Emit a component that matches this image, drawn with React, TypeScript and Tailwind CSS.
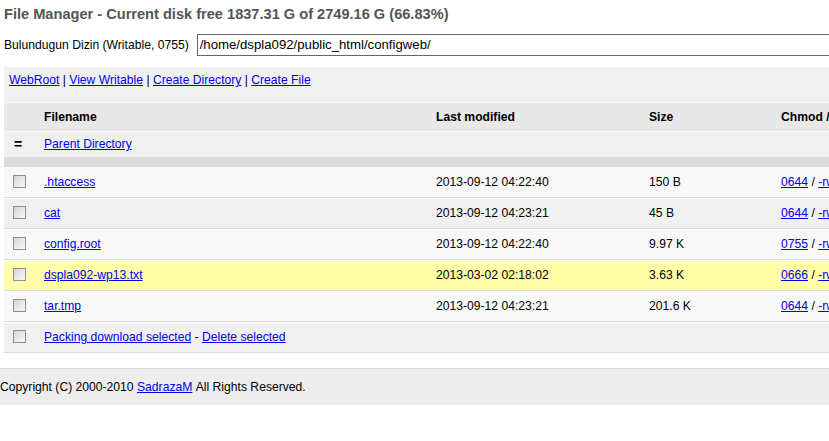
import React from "react";

type FileRow = {
  name: string;
  modified: string;
  size: string;
  chmod: string;
  perms: string;
  bg: string;
};

const files: FileRow[] = [
  { name: ".htaccess", modified: "2013-09-12 04:22:40", size: "150 B", chmod: "0644", perms: "-rw-r--r--", bg: "bg-[#f8f8f8]" },
  { name: "cat", modified: "2013-09-12 04:23:21", size: "45 B", chmod: "0644", perms: "-rw-r--r--", bg: "bg-[#f0f0f0]" },
  { name: "config.root", modified: "2013-09-12 04:22:40", size: "9.97 K", chmod: "0755", perms: "-rwxr-xr-x", bg: "bg-[#f8f8f8]" },
  { name: "dspla092-wp13.txt", modified: "2013-03-02 02:18:02", size: "3.63 K", chmod: "0666", perms: "-rw-rw-rw-", bg: "bg-[#ffffaa]" },
  { name: "tar.tmp", modified: "2013-09-12 04:23:21", size: "201.6 K", chmod: "0644", perms: "-rw-r--r--", bg: "bg-[#f8f8f8]" },
];

const cols = "grid grid-cols-[40px_392px_213px_132px_200px] items-center";

function Link({ children }: { children: React.ReactNode }) {
  return <a href="#" className="text-[#0000ee] underline">{children}</a>;
}

function Checkbox() {
  return (
    <span className="block w-[13px] h-[13px] ml-[9px] border border-[#8f8f8f] bg-gradient-to-br from-[#d4d4d4] to-[#fbfbfb]" />
  );
}

export default function App() {
  return (
    <div className="w-[829px] h-[441px] overflow-hidden bg-white text-black text-[12.15px] leading-[14px] font-['Liberation_Sans',Arial,sans-serif]">
      <div className="h-[27px] pl-[4px] flex items-center text-[14.6px] font-bold text-[#555] whitespace-nowrap">
        File Manager - Current disk free 1837.31 G of 2749.16 G (66.83%)
      </div>

      <div className="mt-[7px] pl-[4px] flex items-center whitespace-nowrap">
        <span>Bulundugun Dizin (Writable, 0755)</span>
        <div className="ml-[8px] w-[700px] h-[22px] shrink-0 border border-[#666] flex items-center px-[2px] text-[13.2px]">
          /home/dspla092/public_html/configweb/
        </div>
      </div>

      <div className="mt-[11px] ml-[4px] w-[900px] bg-[#f0f0f0]">
        <div className="h-[35px] pl-[5px] pt-[6px] whitespace-nowrap">
          <Link>WebRoot</Link> | <Link>View Writable</Link> | <Link>Create Directory</Link> |{" "}
          <Link>Create File</Link>
        </div>

        <div className={`${cols} h-[28px] pt-[1px] bg-[#e8e8e8] border-t border-b border-t-[#f8f8f8] border-b-[#dcdcdc] font-bold`}>
          <span />
          <span>Filename</span>
          <span>Last modified</span>
          <span>Size</span>
          <span className="whitespace-nowrap">Chmod / Perms</span>
        </div>

        <div className={`${cols} h-[27px] pt-[1px] bg-[#f0f0f0]`}>
          <span className="pl-[10px] font-bold text-[14px]">=</span>
          <span>
            <Link>Parent Directory</Link>
          </span>
        </div>

        <div className="h-[10px] bg-[#dcdcdc]" />

        {files.map((f) => (
          <div
            key={f.name}
            className={`${cols} h-[31px] pb-[2px] ${f.bg} border-t border-b border-t-[#fcfcfc] border-b-[#dcdcdc]`}
          >
            <Checkbox />
            <span>
              <Link>{f.name}</Link>
            </span>
            <span>{f.modified}</span>
            <span>{f.size}</span>
            <span className="whitespace-nowrap">
              <Link>{f.chmod}</Link> / <Link>{f.perms}</Link>
            </span>
          </div>
        ))}

        <div className={`${cols} h-[31px] pb-[2px] bg-[#f0f0f0] border-t border-b border-t-[#fcfcfc] border-b-[#dcdcdc]`}>
          <Checkbox />
          <span className="col-span-2 whitespace-nowrap">
            <Link>Packing download selected</Link> - <Link>Delete selected</Link>
          </span>
        </div>
      </div>

      <div className="mt-[15px] h-[37px] border-t border-[#dcdcdc] bg-[#ededed] flex items-center whitespace-nowrap">
        Copyright (C) 2000-2010&nbsp;<Link>SadrazaM</Link>&nbsp;All Rights Reserved.
      </div>
    </div>
  );
}
